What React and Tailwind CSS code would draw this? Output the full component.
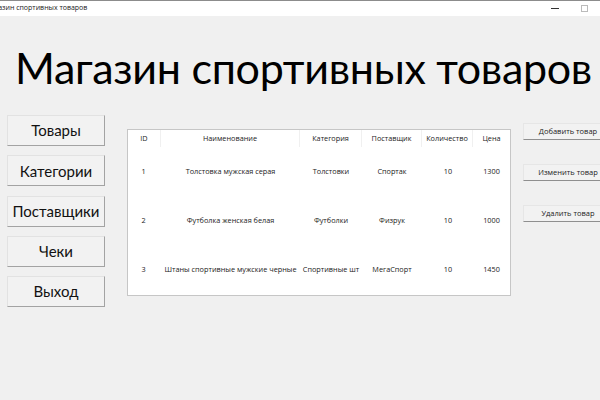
import React from "react";

const rows = [
  { id: 1, name: "Толстовка мужская серая", cat: "Толстовки", sup: "Спортак", qty: 10, price: 1300 },
  { id: 2, name: "Футболка женская белая", cat: "Футболки", sup: "Физрук", qty: 10, price: 1000 },
  { id: 3, name: "Штаны спортивные мужские черные", cat: "Спортивные шт", sup: "МегаСпорт", qty: 10, price: 1450 },
];

const cols = [
  { key: "id", label: "ID", w: "w-[33px]" },
  { key: "name", label: "Наименование", w: "w-[139px]" },
  { key: "cat", label: "Категория", w: "w-[62px]" },
  { key: "sup", label: "Поставщик", w: "w-[60px]" },
  { key: "qty", label: "Количество", w: "w-[51px]" },
  { key: "price", label: "Цена", w: "w-[37px]" },
];

const NavButton = ({ label }) => (
  <button className="h-[31px] w-[98px] bg-[#f2f2f2] border border-[#e2e2e2] border-r-[#a3a3a3] border-b-[#a3a3a3] text-[15px] text-[#111] font-['Lato','Noto_Sans',sans-serif]">
    {label}
  </button>
);

const SideButton = ({ label }) => (
  <button className="h-[17px] w-[90px] shrink-0 bg-[#f2f2f2] border border-[#e6e6e6] border-b-[#8f8f8f] text-[7.5px] text-[#222] font-['Open_Sans','Noto_Sans',sans-serif]">
    {label}
  </button>
);

export default function App() {
  return (
    <div className="w-[600px] h-[400px] overflow-hidden bg-[#f0f0f0] flex flex-col font-['Open_Sans','Noto_Sans',sans-serif]">
      {/* Window title bar */}
      <div className="h-[16px] shrink-0 bg-white border-t border-[#8c8c8c] flex items-center overflow-hidden">
        <span className="ml-[-15px] text-[7px] text-[#222] whitespace-nowrap">Магазин спортивных товаров</span>
        <div className="ml-auto flex items-center gap-[22px] mr-[12px]">
          <span className="block w-[8px] h-px bg-[#333]"></span>
          <span className="block w-[7px] h-[7px] border border-[#bbb]"></span>
        </div>
      </div>

      {/* Heading */}
      <h1 className="mt-[24px] ml-[15px] text-[43px] leading-[56px] tracking-[-0.3px] text-black whitespace-nowrap font-['Lato','Noto_Sans',sans-serif]">
        Магазин спортивных товаров
      </h1>

      {/* Main */}
      <div className="mt-[19px] flex items-start">
        <div className="ml-[7px] flex flex-col gap-[9.25px]">
          <NavButton label="Товары" />
          <NavButton label="Категории" />
          <NavButton label="Поставщики" />
          <NavButton label="Чеки" />
          <NavButton label="Выход" />
        </div>

        <div className="ml-[22px] mt-[14px] w-[384px] h-[167px] bg-white border border-[#c6c6c6] text-[7.3px] text-[#222]">
          <div className="flex h-[17px] items-center">
            {cols.map((c, i) => (
              <div
                key={c.key}
                className={`${c.w} h-full flex items-center justify-center ${i < cols.length - 1 ? "border-r border-[#f0f0f0]" : ""}`}
              >
                {c.label}
              </div>
            ))}
          </div>
          {rows.map((r) => (
            <div key={r.id} className="flex h-[49px] items-center">
              <div className="w-[33px] text-center pr-[2px]">{r.id}</div>
              <div className="w-[139px] text-center whitespace-nowrap">{r.name}</div>
              <div className="w-[62px] text-center whitespace-nowrap overflow-hidden">{r.cat}</div>
              <div className="w-[60px] text-center">{r.sup}</div>
              <div className="w-[51px] text-center pl-[1px]">{r.qty}</div>
              <div className="w-[37px] text-center">{r.price}</div>
            </div>
          ))}
        </div>

        <div className="ml-[12px] mt-[8px] flex flex-col gap-[24px]">
          <SideButton label="Добавить товар" />
          <SideButton label="Изменить товар" />
          <SideButton label="Удалить товар" />
        </div>
      </div>
    </div>
  );
}
